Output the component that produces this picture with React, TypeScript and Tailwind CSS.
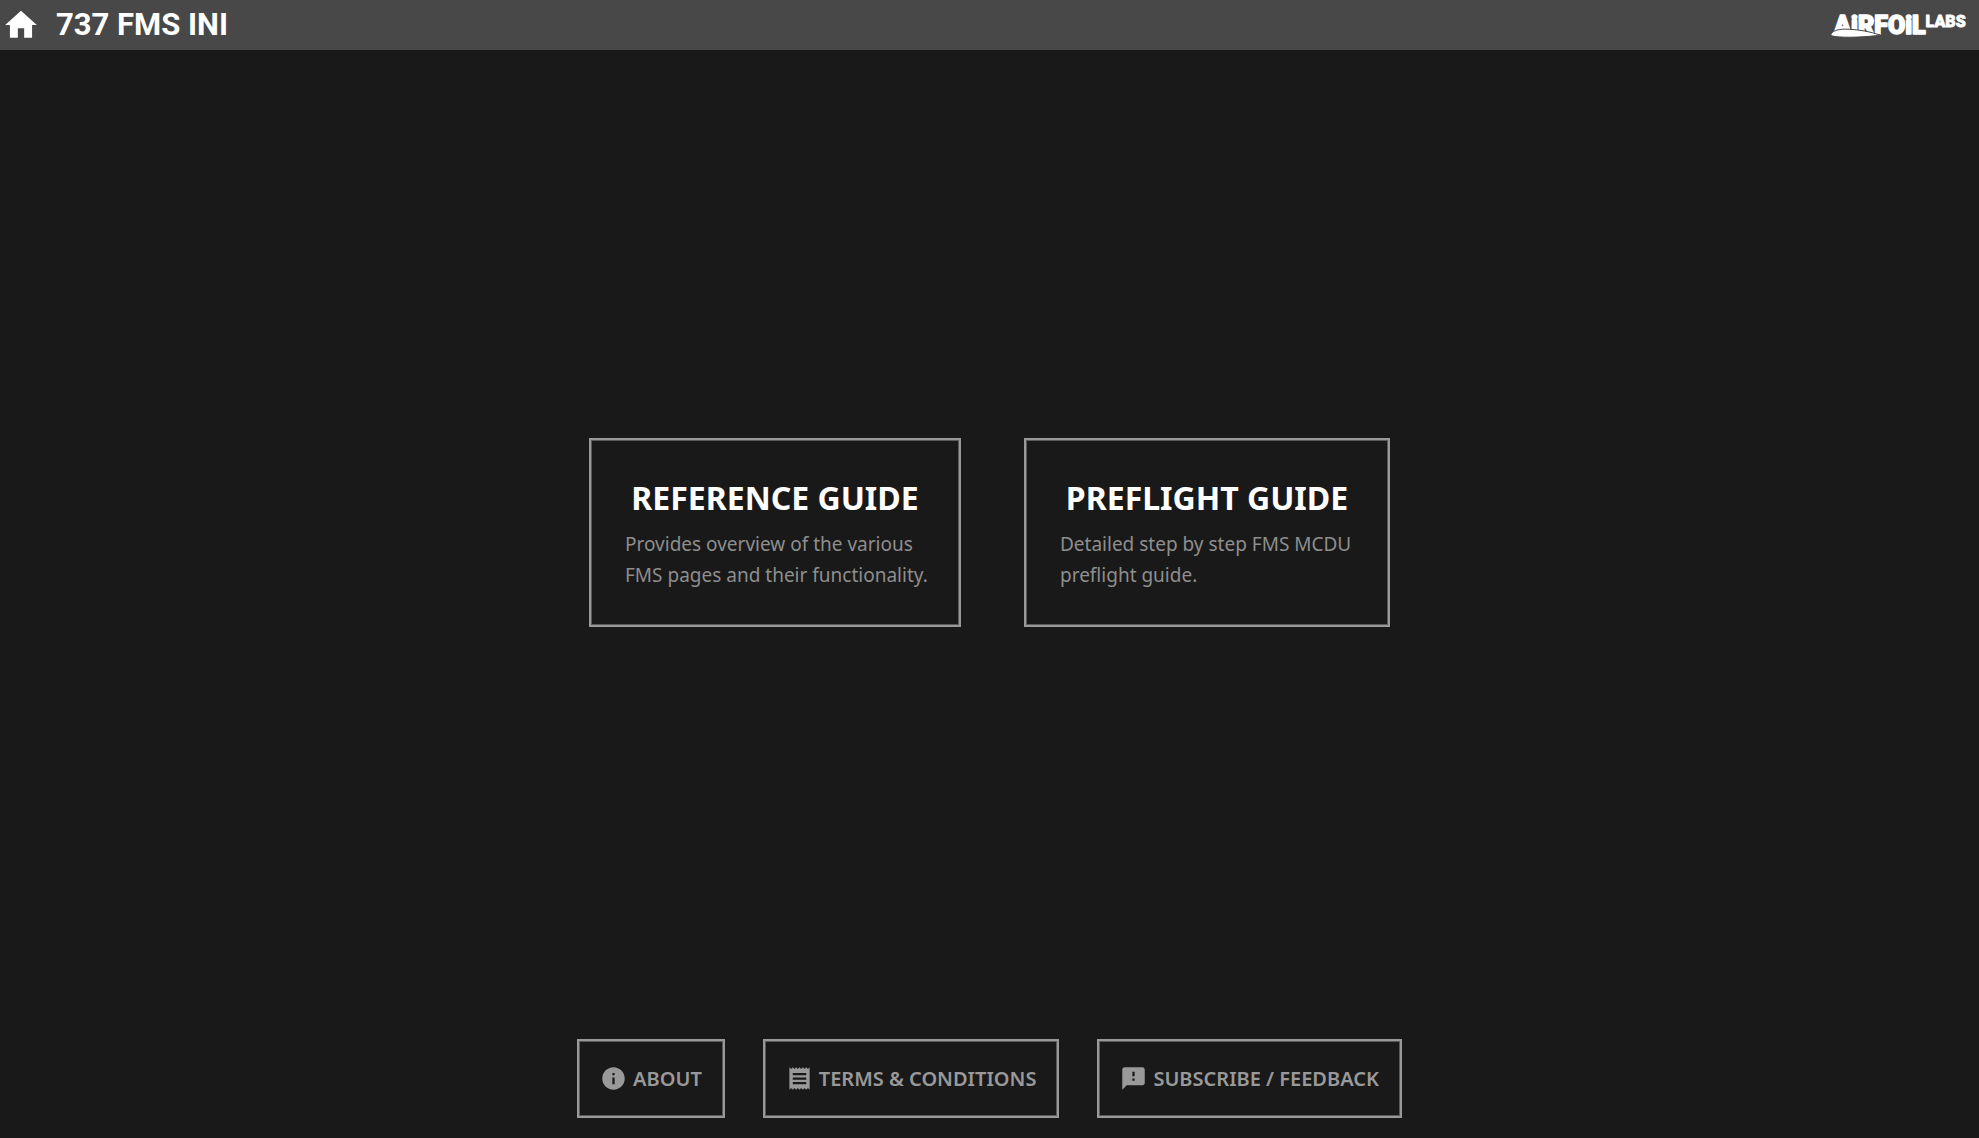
import { MdFeedback, MdHome, MdInfo, MdReceipt } from "react-icons/md";
import type { IconType } from "react-icons";

const frame =
  "border-2 border-[#999999] shadow-[inset_0_0_0_1px_#5a5a5a] hover:border-white";

function Logo() {
  return (
    <svg viewBox="0 0 138 50" className="h-[50px] w-[138px]" role="img" aria-label="Airfoil Labs">
      <text
        x="3"
        y="34"
        fill="#fff"
        stroke="#fff"
        strokeWidth="1.6"
        strokeLinejoin="round"
        fontFamily="Roboto, sans-serif"
        fontWeight="900"
        fontSize="25"
      >
        AiRFOiL
        <tspan dy="-7" fontSize="16" strokeWidth="0.8">
          LABS
        </tspan>
      </text>
      <path
        d="M0 34C2 30.5 8 28.8 17 29.2C28 29.6 39 31.5 49 35C38 37 14 38 4 36.5C1 36-.5 35.3 0 34Z"
        fill="#fff"
        stroke="#484848"
        strokeWidth="1"
      />
    </svg>
  );
}

function GuideCard({ title, lines, width }: { title: string; lines: string[]; width: string }) {
  return (
    <a href="#" className={`flex flex-col px-[34px] pt-[35px] pb-[34px] ${frame} ${width}`}>
      <h2 className="self-center text-[32px] leading-[46px] font-bold whitespace-nowrap text-white">
        {title}
      </h2>
      <p className="mt-2 text-[19px] leading-[31px] font-normal whitespace-nowrap text-[#8e8e8e]">
        {lines[0]}
        <br />
        {lines[1]}
      </p>
    </a>
  );
}

function FooterButton({ icon: Icon, label }: { icon: IconType; label: string }) {
  return (
    <button
      type="button"
      className={`flex h-[79px] cursor-pointer items-center gap-1.5 px-[21px] text-[20px] font-semibold whitespace-nowrap text-[#999999] ${frame}`}
    >
      <Icon className="size-[27px]" aria-hidden="true" />
      {label}
    </button>
  );
}

export default function App() {
  return (
    <div className="flex min-h-screen flex-col bg-[#191919] font-['Noto_Sans',sans-serif]">
      <header className="flex h-[50px] shrink-0 items-center justify-between bg-[#484848] pr-2.5 pl-0.5">
        <div className="flex items-center gap-4">
          <a href="#" aria-label="Home">
            <MdHome className="size-[38px] text-white" />
          </a>
          <h1 className="font-['Roboto',sans-serif] text-[31px] leading-[50px] font-bold text-white">
            737 FMS INI
          </h1>
        </div>
        <Logo />
      </header>
      <main className="flex flex-1 flex-wrap items-center justify-center gap-[63px]">
        <GuideCard
          title="REFERENCE GUIDE"
          lines={["Provides overview of the various", "FMS pages and their functionality."]}
          width="w-[372px]"
        />
        <GuideCard
          title="PREFLIGHT GUIDE"
          lines={["Detailed step by step FMS MCDU", "preflight guide."]}
          width="w-[366px]"
        />
      </main>
      <footer className="flex flex-wrap justify-center gap-[38px] pt-6 pb-5">
        <FooterButton icon={MdInfo} label="ABOUT" />
        <FooterButton icon={MdReceipt} label="TERMS & CONDITIONS" />
        <FooterButton icon={MdFeedback} label="SUBSCRIBE / FEEDBACK" />
      </footer>
    </div>
  );
}
